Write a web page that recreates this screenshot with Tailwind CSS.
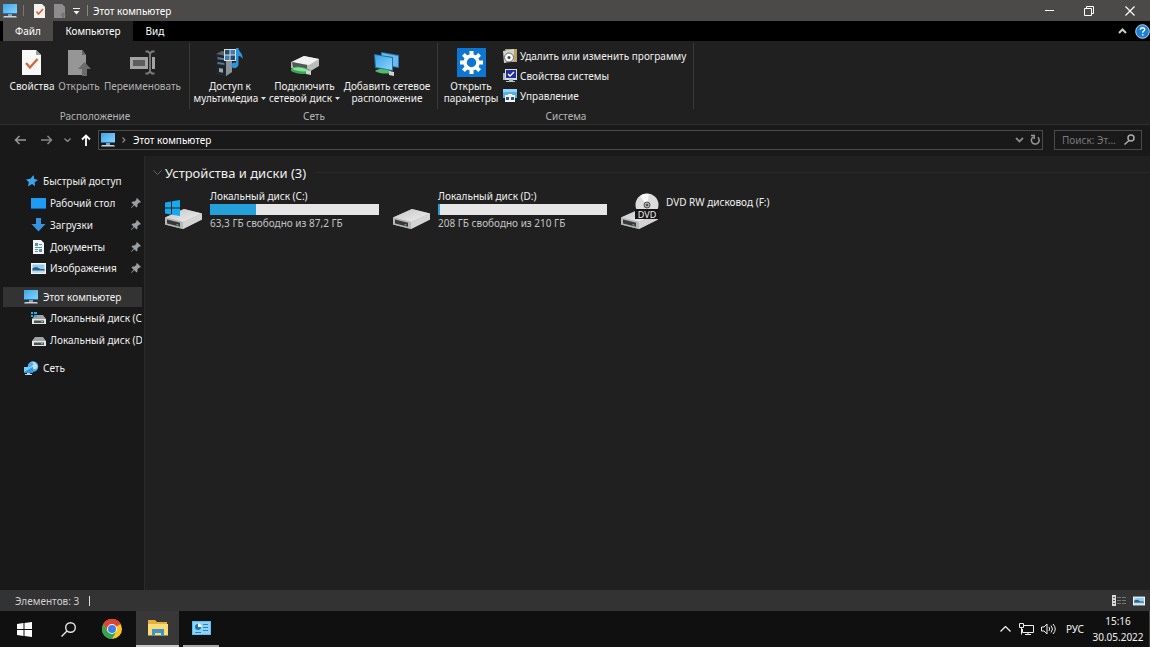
<!DOCTYPE html>
<html lang="ru">
<head>
    <meta charset="UTF-8">
    <meta name="viewport" content="width=device-width, initial-scale=1.0">
    <title>Этот компьютер</title>
    <script src="https://cdn.jsdelivr.net/npm/@tailwindcss/browser@4"></script>
</head>
<body class="flex h-screen flex-col overflow-hidden bg-[#202020] font-['Noto_Sans','Open_Sans',sans-serif] text-[10px] leading-3 text-[#f0f0f0]">

    <!-- shared icons -->
    <svg class="absolute h-0 w-0" aria-hidden="true">
        <defs>
            <linearGradient id="screen" x1="0" y1="0" x2="1" y2="1">
                <stop offset="0" stop-color="#3aa5ea"/><stop offset="1" stop-color="#8fd4fb"/>
            </linearGradient>
            <linearGradient id="metal" x1="0" y1="0" x2="1" y2="1">
                <stop offset="0" stop-color="#c4c4c4"/><stop offset="1" stop-color="#f0f0f0"/>
            </linearGradient>
        </defs>
        <symbol id="pc" viewBox="0 0 16 14">
            <path d="M1 0h14v10H1z" fill="url(#screen)"/>
            <path d="M1 9h14v1H1z" fill="#1c77b8"/>
            <path d="M6 10h4v2H6z" fill="#8ba3b5"/>
            <path d="M2 12h12l1 1.500H1z" fill="#c9d4dc"/>
        </symbol>
        <symbol id="drive" viewBox="0 0 40 24">
            <path d="M1 11.500 20 3l18 4.500v6L19 23 1 18.500z" fill="#a8a8a8"/>
            <path d="M1 11.500 20 3l18 4.500L19 16z" fill="url(#metal)"/>
            <path d="M1 11.500L19 16v7L1 18.500z" fill="#b8b8b8"/>
            <path d="M3 13.500l13 3.200v4L3 17.500z" fill="#353a38"/>
            <path d="M19 16l19-8.500v6L19 23z" fill="#d4d4d4"/>
            <path d="M12.500 18l2 .5v1.200l-2-.5z" fill="#59b77a"/>
        </symbol>
        <symbol id="drive-small" viewBox="0 0 14 9">
            <path d="M3 0h8l3 4H0z" fill="#9fa3a4"/>
            <path d="M0 4h14v5H0z" fill="#e3e6e7"/>
            <path d="M2 5.500h10V8H2z" fill="#4b5052"/>
            <path d="M9 6.200h2v1H9z" fill="#7fd695"/>
        </symbol>
        <symbol id="pin" viewBox="0 0 10 10">
            <path d="M6 0l4 4-1 .8-.8-.2-1.800 1.900.1 2L5.500 9.500 3.300 7.300.4 9.900 0 9.500l2.700-2.800L.5 4.500l1-1 2 .1 1.900-1.800-.2-.9z" fill="#9b9fa3"/>
        </symbol>
        <symbol id="picture" viewBox="0 0 15 11">
            <path d="M0 0h15v11H0z" fill="#f1f5f7"/>
            <path d="M1.500 1.500h12v8h-12z" fill="#8fccf0"/>
            <path d="M1.500 5l4-1 4 2h4v2h-12z" fill="#2b5f83"/>
            <path d="M1.500 7.500h12v2h-12z" fill="#b9d8e8"/>
        </symbol>
    </svg>

    <!-- title bar -->
    <header class="flex h-[21px] shrink-0 items-center bg-[#4b4a48]">
        <svg class="ml-[2px] h-[14px] w-4"><use href="#pc"/></svg>
        <span class="ml-[5px] h-[11px] w-px bg-[#777]"></span>
        <button class="ml-[10px]" aria-label="Свойства">
            <svg class="h-[14px] w-[11px]" viewBox="0 0 11 14">
                <path d="M0 0h8l3 3v11H0z" fill="#f4f1ef"/>
                <path d="M2.500 7.500l2 2.500 4.500-5" fill="none" stroke="#d0623a" stroke-width="1.500"/>
            </svg>
        </button>
        <button class="ml-[9px]" aria-label="Открыть">
            <svg class="h-[14px] w-3" viewBox="0 0 12 14">
                <path d="M0 0h8l3 3v11H0z" fill="#8d8d8d"/>
                <path d="M9 8l3 3.500h-2V14H8v-2.500H6z" fill="#767676"/>
            </svg>
        </button>
        <button class="ml-[7px]" aria-label="Настройка панели">
            <svg class="h-2 w-[7px]" viewBox="0 0 7 8"><path d="M0 1h7v1H0zM.5 4h6L3.500 7.500z" fill="#f0f0f0"/></svg>
        </button>
        <span class="ml-[7px] h-[11px] w-px bg-[#888]"></span>
        <h1 class="ml-[5px] grow text-white">Этот компьютер</h1>
        <button class="grid h-full w-10 place-items-center" aria-label="Свернуть"><span class="h-px w-[9px] bg-white"></span></button>
        <button class="grid h-full w-10 place-items-center" aria-label="Восстановить">
            <svg class="h-[10px] w-[10px]" viewBox="0 0 10 10" fill="none" stroke="#fff"><path d="M.5 2.500h7v7h-7zM2.500 2.500v-2h7v7h-2"/></svg>
        </button>
        <button class="grid h-full w-[41px] place-items-center" aria-label="Закрыть">
            <svg class="h-[10px] w-[10px]" viewBox="0 0 10 10" stroke="#fff" stroke-width="1.200"><path d="M.5.5l9 9M9.500.5l-9 9"/></svg>
        </button>
    </header>

    <!-- tabs -->
    <nav class="flex h-5 shrink-0 items-stretch bg-black text-white">
        <button class="ml-[3px] w-[50px] bg-[#4b4a48]">Файл</button>
        <button class="w-20 bg-[#202020]">Компьютер</button>
        <button class="w-[44px]">Вид</button>
        <span class="grow"></span>
        <button class="mr-[8px]" aria-label="Свернуть ленту">
            <svg class="h-[6px] w-[9px]" viewBox="0 0 9 6" fill="none" stroke="#ccc" stroke-width="2"><path d="M1 5l3.500-3.500L8 5"/></svg>
        </button>
        <button aria-label="Справка">
            <svg class="h-[15px] w-[15px]" viewBox="0 0 15 15">
                <circle cx="7.500" cy="7.500" r="6.800" fill="#1f7fd4" stroke="#b5d7f2"/>
                <path d="M5.400 5.800c0-2.800 4.300-2.600 4.300-.3 0 1.500-2 1.600-2 3.200M7.700 10v1.600" fill="none" stroke="#fff" stroke-width="1.400"/>
            </svg>
        </button>
    </nav>

    <!-- ribbon -->
    <section class="flex h-[84px] shrink-0 border-b border-[#303030] pt-[2px]">
        <div class="flex w-[190px] flex-col">
            <div class="flex h-[66px] items-start border-r border-[#3a3a3a] pl-2">
                <button class="flex w-12 flex-col items-center whitespace-nowrap pt-[6px]">
                    <svg class="mb-1 h-[27px] w-5" viewBox="0 0 20 27">
                        <path d="M0 1h14l5 5v20H0z" fill="#fbf9f8"/>
                        <path d="M14 1l5 5h-5z" fill="#9d9d9d"/>
                        <path d="M4 14l4 4.500 7.500-8.500" fill="none" stroke="#cf6a42" stroke-width="2.400"/>
                    </svg>
                    Свойства
                </button>
                <button class="flex w-[46px] flex-col items-center whitespace-nowrap pt-[6px] text-[#b0b0b0]">
                    <svg class="mb-1 h-[27px] w-6" viewBox="0 0 24 27">
                        <path d="M1 1h14l4 5v20H1z" fill="#969696"/>
                        <path d="M15 1l4 5h-4z" fill="#666"/>
                        <path d="M17.500 13l6.500 7h-4v7h-5v-7h-4z" fill="#6b6b6b"/>
                    </svg>
                    Открыть
                </button>
                <button class="flex w-[81px] flex-col items-center whitespace-nowrap pt-[6px] text-[#b0b0b0]">
                    <svg class="mb-1 h-[27px] w-[26px]" viewBox="0 0 26 27">
                        <path d="M0 8h25v12H0z" fill="#a3a3a3"/>
                        <path d="M3 11h12v6H3z" fill="#5d5d5d"/>
                        <path d="M20 4v19" stroke="#202020" stroke-width="4"/>
                        <path d="M15.500 2.500h2.500l2 2 2-2h2.500M20 4v19M15.500 24.500h2.500l2-2 2 2h2.500" fill="none" stroke="#7d7d7d" stroke-width="1.800"/>
                    </svg>
                    Переименовать
                </button>
            </div>
            <h2 class="pt-px text-center text-[#b4b4b4]">Расположение</h2>
        </div>

        <div class="flex w-[248px] flex-col">
            <div class="flex h-[66px] items-start border-r border-[#3a3a3a] pl-[2px]">
                <button class="flex w-[76px] flex-col items-center whitespace-nowrap pt-[5px]">
                    <svg class="mb-1 h-7 w-[30px]" viewBox="0 0 30 28">
                        <path d="M1 6l6-3 10 2v19l-6 4-10-3z" fill="#5c646a"/>
                        <path d="M1 6l10 2v20L1 25z" fill="#1e242b"/>
                        <path d="M2.500 9l7 1.200v2l-7-1zM2.500 14l7 1v2l-7-1z" fill="#5d7791"/>
                        <path d="M4 20l4 .7v4L4 24z" fill="#9aa3a9"/>
                        <path d="M11 8l6-3v19l-6 4z" fill="#8b9297"/>
                        <path d="M9 1h12v12H9z" fill="#d6dfe4"/>
                        <path d="M10 2h4.500v4.500H10zM15.500 7.500H20V12h-4.500z" fill="#2a4a6b"/>
                        <path d="M15.500 2H20v4.500h-4.500zM10 7.500h4.500V12H10z" fill="#3f7db0"/>
                        <path d="M21 0h2.500c0 4 5 5 4 11-1-2-2-3-4-3v8c0 5-7 5.500-7 1.500 0-2.500 2.500-3.500 4.500-2.500z" fill="#2d93dd"/>
                    </svg>
                    <span>Доступ к</span>
                    <span class="flex items-center gap-[3px]">мультимедиа
                        <svg class="h-[3px] w-[5px]" viewBox="0 0 5 3"><path d="M0 0h5L2.500 3z" fill="#ddd"/></svg></span>
                </button>
                <button class="flex w-[73px] flex-col items-center whitespace-nowrap pt-[5px]">
                    <svg class="mb-1 h-7 w-[30px]" viewBox="0 0 30 28">
                        <path d="M1 14L14 8l15 3v7l-10 6L1 20z" fill="#b9bcba"/>
                        <path d="M2 14L14 8l15 3-10 6z" fill="#f0f1f0"/>
                        <path d="M2 14l15 3v6L3 19z" fill="#515856"/>
                        <path d="M1 21c4-4 11-3 19 1v3c-6 2-14 1-19-2z" fill="#39a956"/>
                        <path d="M2 21c4-2 10-2 16 1v1c-5 1-11 0-16-2z" fill="#8ce09a"/>
                        <path d="M16 22l5 1v4l-5-1z" fill="#cfd4d2"/>
                    </svg>
                    <span>Подключить</span>
                    <span class="flex items-center gap-[3px]">сетевой диск
                        <svg class="h-[3px] w-[5px]" viewBox="0 0 5 3"><path d="M0 0h5L2.500 3z" fill="#ddd"/></svg></span>
                </button>
                <button class="flex w-[92px] flex-col items-center whitespace-nowrap pt-[5px]">
                    <svg class="mb-1 h-7 w-[26px]" viewBox="0 0 26 28">
                        <path d="M7 4l18 3v13l-18-3z" fill="#2577b4"/>
                        <path d="M8 5l16 3v11L8 16z" fill="#68baf0"/>
                        <path d="M0 6l19 3v14L1 20z" fill="#2471a8"/>
                        <path d="M1 7l17 3v12L2 19z" fill="url(#screen)"/>
                        <path d="M1 23c4-3 10-2 16 0v2c-5 1-11 1-16-2z" fill="#50bd68"/>
                        <path d="M15 23l5 1v4l-5-1z" fill="#cfd4d2"/>
                    </svg>
                    <span>Добавить сетевое</span>
                    <span>расположение</span>
                </button>
            </div>
            <h2 class="pt-px text-center text-[#b4b4b4]">Сеть</h2>
        </div>

        <div class="flex w-[256px] flex-col">
            <div class="flex h-[66px] items-start border-r border-[#3a3a3a] pl-[3px]">
                <button class="flex w-[60px] flex-col items-center whitespace-nowrap pt-[5px]">
                    <svg class="mb-[3px] h-[29px] w-[29px]" viewBox="0 0 29 29">
                        <path d="M0 0h29v29H0z" fill="#0d76d2"/>
                        <g stroke="#fff" stroke-width="4">
                            <path d="M14.500 3v5M14.500 21v5M3 14.500h5M21 14.500h5M6.400 6.400l3.500 3.500M19.100 19.100l3.500 3.500M6.400 22.600l3.500-3.500M19.100 9.900l3.500-3.500"/>
                        </g>
                        <circle cx="14.500" cy="14.500" r="6.500" fill="none" stroke="#fff" stroke-width="3.500"/>
                    </svg>
                    <span>Открыть</span>
                    <span>параметры</span>
                </button>
                <div class="flex flex-col pl-[2px] pt-[3px]">
                    <button class="flex h-5 items-center gap-[3px] whitespace-nowrap">
                        <svg class="h-[14px] w-[14px]" viewBox="0 0 14 14">
                            <path d="M2 0h12v13H6z" fill="#b9a36b"/>
                            <path d="M0 2l11-2v12L1 14z" fill="#d2d3d3"/>
                            <circle cx="6" cy="8.500" r="4.500" fill="#f8f8f8" stroke="#65696b"/>
                            <circle cx="6" cy="8.500" r="1.500" fill="#414141"/>
                        </svg>
                        Удалить или изменить программу
                    </button>
                    <button class="flex h-5 items-center gap-[3px] whitespace-nowrap">
                        <svg class="h-[14px] w-[14px]" viewBox="0 0 14 14">
                            <path d="M0 4h3v7H0z" fill="#aeb7bb"/>
                            <path d="M2 0h12v11H2z" fill="#d8dde0"/>
                            <path d="M3 1h10v8H3z" fill="#1e2e9d"/>
                            <path d="M5 5l2 2 4-4" fill="none" stroke="#fff" stroke-width="1.400"/>
                            <path d="M6 10h4v2h2v1H3v-1h3z" fill="#b8c0c4"/>
                        </svg>
                        Свойства системы
                    </button>
                    <button class="flex h-5 items-center gap-[3px] whitespace-nowrap">
                        <svg class="h-[14px] w-[14px]" viewBox="0 0 14 14">
                            <path d="M0 0h14v9H0z" fill="#4fb2ec"/>
                            <path d="M0 0h14v3H0z" fill="#93d5f8"/>
                            <path d="M2 6h10v7H2z" fill="#eef2f4"/>
                            <path d="M3 8h3v3H3zM8 8h3v3H8z" fill="#34566d"/>
                            <path d="M5 5h4v1H5z" fill="#fff"/>
                        </svg>
                        Управление
                    </button>
                </div>
            </div>
            <h2 class="pt-px text-center text-[#b4b4b4]">Система</h2>
        </div>
    </section>

    <!-- address row -->
    <section class="flex h-[31px] shrink-0 items-center bg-[#191919] pb-[2px] pl-[14px] pr-2">
        <button aria-label="Назад"><svg class="h-[10px] w-3" viewBox="0 0 12 10" fill="none" stroke="#999" stroke-width="1.500"><path d="M12 5H1.500M5.500 1l-4 4 4 4"/></svg></button>
        <button class="ml-[15px]" aria-label="Вперёд"><svg class="h-[10px] w-3" viewBox="0 0 12 10" fill="none" stroke="#888" stroke-width="1.500"><path d="M0 5h10.500M6.500 1l4 4-4 4"/></svg></button>
        <button class="ml-[11px]" aria-label="Недавние"><svg class="h-1 w-[7px]" viewBox="0 0 7 4" fill="none" stroke="#888" stroke-width="1.400"><path d="M.5.5l3 3 3-3"/></svg></button>
        <button class="ml-[10px]" aria-label="Вверх"><svg class="h-3 w-[10px]" viewBox="0 0 10 12" fill="none" stroke="#fff" stroke-width="1.800"><path d="M5 12V1.500M1 5.500l4-4 4 4"/></svg></button>
        <div class="ml-[7px] flex h-5 grow items-center border border-[#4a4a4a] pl-px pr-[2px]">
            <svg class="h-[14px] w-4"><use href="#pc"/></svg>
            <svg class="ml-[6px] h-[6px] w-1" viewBox="0 0 4 6" fill="none" stroke="#888" stroke-width="1.200"><path d="M.5.5L3 3 .5 5.500"/></svg>
            <button class="ml-[7px] text-white">Этот компьютер</button>
            <span class="grow"></span>
            <button aria-label="Журнал"><svg class="h-[6px] w-[9px]" viewBox="0 0 9 6" fill="none" stroke="#888" stroke-width="1.800"><path d="M1 1l3.500 3.500L8 1"/></svg></button>
            <button class="ml-[6px]" aria-label="Обновить">
                <svg class="h-[11px] w-[10px]" viewBox="0 0 10 11" fill="none" stroke="#999" stroke-width="1.500"><path d="M7.800 3.200A3.900 3.900 0 1 1 3 3M1 1.500h3.200V5"/></svg>
            </button>
        </div>
        <label class="ml-[11px] flex h-5 w-[88px] items-center border border-[#4a4a4a] pl-[7px] pr-[6px]">
            <input type="text" placeholder="Поиск: Эт..." aria-label="Поиск: Этот компьютер" class="w-0 grow bg-transparent outline-none placeholder:text-[#7a7a7a]">
            <svg class="h-[11px] w-[11px]" viewBox="0 0 11 11" fill="none" stroke="#aaa" stroke-width="1.500"><circle cx="7" cy="4" r="3"/><path d="M5 6.500L.5 10.500"/></svg>
        </label>
    </section>

    <div class="flex min-h-0 grow">
        <!-- navigation pane -->
        <aside class="w-[145px] shrink-0 overflow-hidden border-r border-[#2b2b2b] bg-[#191919] pl-[3px] pr-[2px] pt-[14px]">
            <a href="#" class="flex h-[22px] items-center pl-[23px] whitespace-nowrap">
                <svg class="mr-[5px] h-3 w-3" viewBox="0 0 12 12"><path d="M7.500 0l.8 4 3.700 1-3.300 2.200.3 4L6 9 2 11.500l.8-4.300L0 4.500l4.300-.7z" fill="#39a4ee"/></svg>
                Быстрый доступ
            </a>
            <a href="#" class="flex h-[22px] items-center pl-[28px] pr-px whitespace-nowrap">
                <svg class="mr-1 h-[11px] w-[15px]" viewBox="0 0 15 11"><path d="M0 0h15v11H0z" fill="#1d9bf5"/><path d="M0 10h15v1H0z" fill="#0c68b4"/></svg>
                <span class="grow">Рабочий стол</span>
                <svg class="h-[10px] w-[10px]"><use href="#pin"/></svg>
            </a>
            <a href="#" class="flex h-[22px] items-center pl-[28px] pr-px whitespace-nowrap">
                <svg class="mr-1 h-[14px] w-[15px]" viewBox="0 0 15 14"><path d="M5 0h5v6h4.500L7.500 13.500.5 6H5z" fill="#3793e0"/></svg>
                <span class="grow">Загрузки</span>
                <svg class="h-[10px] w-[10px]"><use href="#pin"/></svg>
            </a>
            <a href="#" class="flex h-[21px] items-center pl-[28px] pr-px whitespace-nowrap">
                <svg class="mr-1 h-[14px] w-[15px]" viewBox="0 0 15 14">
                    <path d="M2 0h8l3 3v11H2z" fill="#f2f5f6"/>
                    <path d="M4 3h3v3H4zM8 4h3v1H8zM4 7h7v1H4zM4 9h3v1H4zM8 9h3v3H8zM4 11h3v1H4z" fill="#5790a8"/>
                </svg>
                <span class="grow">Документы</span>
                <svg class="h-[10px] w-[10px]"><use href="#pin"/></svg>
            </a>
            <a href="#" class="flex h-[22px] items-center pl-[28px] pr-px whitespace-nowrap">
                <svg class="mr-1 h-[11px] w-[15px]"><use href="#picture"/></svg>
                <span class="grow">Изображения</span>
                <svg class="h-[10px] w-[10px]"><use href="#pin"/></svg>
            </a>
            <a href="#" class="mt-2 flex h-5 items-center bg-[#333] pl-[20px] whitespace-nowrap">
                <svg class="mr-1 h-[14px] w-4"><use href="#pc"/></svg>
                Этот компьютер
            </a>
            <a href="#" class="flex h-[22px] items-center overflow-hidden pl-[28px] whitespace-nowrap">
                <svg class="mr-1 h-3 w-[15px] shrink-0" viewBox="0 0 15 12">
                    <use href="#drive-small" x="1" y="3" width="14" height="9"/>
                    <path d="M0 0h2v2H0zM3 0h3v2H3zM0 3h2v2H0zM3 3h3v2H3z" fill="#20b0ee"/>
                </svg>
                Локальный диск (C:)
            </a>
            <a href="#" class="flex h-[22px] items-center overflow-hidden pl-[28px] whitespace-nowrap">
                <svg class="mr-1 h-3 w-[15px] shrink-0" viewBox="0 0 15 12"><use href="#drive-small" x="1" y="3" width="14" height="9"/></svg>
                Локальный диск (D:)
            </a>
            <a href="#" class="mt-[6px] flex h-[22px] items-center pl-[20px] whitespace-nowrap">
                <svg class="mr-1 h-[15px] w-4" viewBox="0 0 16 15">
                    <circle cx="10" cy="5.500" r="5.300" fill="#58aee6"/>
                    <path d="M8 1c3 0 3 3 1 4s0 3 3 3c2 0 3-2 2-4-1-3-4-4-6-3z" fill="#b8e0f7"/>
                    <path d="M1 6h9v6H1z" fill="#2f97de"/>
                    <path d="M1 6h9L1 11z" fill="#7ccaf6"/>
                    <path d="M4 12h3v1h2v1H2v-1h2z" fill="#c9d4dc"/>
                </svg>
                Сеть
            </a>
        </aside>

        <!-- drives -->
        <main class="grow pl-2">
            <div class="flex h-[33px] items-center">
                <svg class="h-[5px] w-[9px]" viewBox="0 0 9 5" fill="none" stroke="#666"><path d="M.5.5l4 4 4-4"/></svg>
                <h2 class="ml-[3px] text-[13px] leading-4">Устройства и диски (3)</h2>
                <span class="ml-2 h-px grow bg-[#2a2a2a]"></span>
            </div>
            <ul class="flex pl-[11px]">
                <li class="flex w-[228px] gap-[6px]">
                    <svg class="mt-[11px] h-[30px] w-10 shrink-0" viewBox="0 0 40 30">
                        <use href="#drive" x="0" y="6" width="40" height="24"/>
                        <path d="M1 2.500l6-1v6H1zM8 1.300l8-1.300v7.500H8zM1 8.500h6v6l-6-1zM8 8.500h8V16l-8-1.300z" fill="#15a9ee"/>
                    </svg>
                    <div class="w-[169px]">
                        <h3 class="leading-[14px]">Локальный диск (C:)</h3>
                        <div class="mt-px h-[11px] bg-[#e6e6e6]"><div class="h-full bg-[#26a0da]" style="width: 27.5%"></div></div>
                        <p class="pt-px leading-[14px] text-[#c4c4c4]">63,3 ГБ свободно из 87,2 ГБ</p>
                    </div>
                </li>
                <li class="flex w-[228px] gap-[6px]">
                    <svg class="mt-[17px] h-6 w-10 shrink-0"><use href="#drive"/></svg>
                    <div class="w-[169px]">
                        <h3 class="leading-[14px]">Локальный диск (D:)</h3>
                        <div class="mt-px h-[11px] bg-[#e6e6e6]"><div class="h-full bg-[#26a0da]" style="width: 1%"></div></div>
                        <p class="pt-px leading-[14px] text-[#c4c4c4]">208 ГБ свободно из 210 ГБ</p>
                    </div>
                </li>
                <li class="flex w-[228px] gap-[6px]">
                    <svg class="mt-1 h-[37px] w-10 shrink-0" viewBox="0 0 40 37">
                        <use href="#drive" x="0" y="13" width="40" height="24"/>
                        <circle cx="27" cy="12" r="11.500" fill="#dcdcdc"/>
                        <path d="M27 12L20 3a11.500 11.500 0 0 1 9-2z" fill="#fafafa"/>
                        <circle cx="27" cy="12" r="3" fill="#aaa" stroke="#555"/>
                        <circle cx="27" cy="12" r="1" fill="#333"/>
                        <path d="M15 16h24v10H15z" fill="#161616"/>
                        <text x="27" y="24.500" text-anchor="middle" font-size="9" fill="#f2f2f2">DVD</text>
                    </svg>
                    <h3 class="pt-[6px] leading-[14px]">DVD RW дисковод (F:)</h3>
                </li>
            </ul>
        </main>
    </div>

    <!-- status bar -->
    <div class="flex h-[21px] shrink-0 items-center bg-[#333] pl-[15px] pr-[5px] text-[#cfcfcf]">
        <span>Элементов: 3</span>
        <span class="ml-[10px] h-[10px] w-px bg-[#ddd]"></span>
        <span class="grow"></span>
        <button class="mr-[7px]" aria-label="Таблица">
            <svg class="h-[11px] w-[14px]" viewBox="0 0 14 11">
                <path d="M0 0h4v11H0z" fill="#d9d9d9"/>
                <path d="M1 2h2v1H1zM1 5h2v1H1zM1 8h2v1H1z" fill="#555"/>
                <path d="M5 2h4v1H5zM10 2h4v1h-4zM5 5h4v1H5zM10 5h4v1h-4zM5 8h4v1H5zM10 8h4v1h-4z" fill="#777"/>
            </svg>
        </button>
        <button aria-label="Крупные значки"><svg class="h-[10px] w-3"><use href="#picture"/></svg></button>
    </div>

    <!-- taskbar -->
    <footer class="flex h-9 shrink-0 items-stretch bg-[#101010]">
        <button class="grid w-12 place-items-center" aria-label="Пуск">
            <svg class="h-[15px] w-[15px]" viewBox="0 0 15 15"><path d="M0 2l6.500-1v6H0zM7.500.9L15 0v7H7.500zM0 8h6.500v6L0 13zM7.500 8H15v7l-7.500-1z" fill="#fff"/></svg>
        </button>
        <button class="grid w-10 place-items-center" aria-label="Поиск">
            <svg class="h-[15px] w-[15px]" viewBox="0 0 15 15" fill="none" stroke="#e5e5e5" stroke-width="1.400"><circle cx="9.500" cy="5.500" r="4.800"/><path d="M6 9l-5.500 5.500"/></svg>
        </button>
        <button class="grid w-12 place-items-center" aria-label="Chrome">
            <svg class="h-5 w-5" viewBox="0 0 20 20">
                <circle cx="10" cy="10" r="10" fill="#f9c922"/>
                <path d="M10 10L1.340 5A10 10 0 0 1 18.660 5z" fill="#df4334"/>
                <path d="M10 5h8.660A10 10 0 0 0 1.340 5L5.670 12.500z" fill="#df4334"/>
                <path d="M1.340 5A10 10 0 0 0 10 20l4.330-7.500-8.660 0z" fill="#35a350"/>
                <circle cx="10" cy="10" r="5" fill="#f4f4f4"/>
                <circle cx="10" cy="10" r="4" fill="#3d7fe8"/>
            </svg>
        </button>
        <button class="grid w-[43px] place-items-center border-b-2 border-[#c9c9c9] bg-[#383838]" aria-label="Проводник">
            <svg class="h-4 w-5" viewBox="0 0 20 16">
                <path d="M0 0h7l2 2h10v13H0z" fill="#e5b13c"/>
                <path d="M0 4h20v11.500H0z" fill="#fbdc76"/>
                <path d="M4 9h12v7h-3v-3H7v3H4z" fill="#3f94c9"/>
            </svg>
        </button>
        <button class="ml-1 grid w-9 place-items-center border-b-2 border-[#a8a8a8]" aria-label="Панель управления">
            <svg class="h-[14px] w-[19px]" viewBox="0 0 19 14">
                <path d="M0 0h19v14H0z" fill="#5dbcf0"/>
                <path d="M1 1h17v12H1z" fill="#8bd4f8"/>
                <circle cx="6" cy="6" r="3" fill="#1f71b0"/>
                <path d="M6 6V2.500A3.500 3.500 0 0 1 9.500 6z" fill="#fff"/>
                <path d="M11 3h5v1h-5zM11 6h5v1h-5zM11 9h5v1h-5zM3 11h6v1H3z" fill="#2582c4"/>
            </svg>
        </button>
        <span class="grow"></span>
        <button class="mr-[8px]" aria-label="Скрытые значки">
            <svg class="h-[6px] w-[11px]" viewBox="0 0 11 6" fill="none" stroke="#eee" stroke-width="1.300"><path d="M.5 5.500l5-5 5 5"/></svg>
        </button>
        <button class="mr-[7px]" aria-label="Сеть">
            <svg class="h-3 w-[15px]" viewBox="0 0 15 12" fill="none" stroke="#eee"><path d="M5 2.500h9.500v7H3.500V6M.5.500h4v4h-4zM2.500 5v6.500M6 11.500h6M9 10v1.500"/></svg>
        </button>
        <button class="mr-[9px]" aria-label="Громкость">
            <svg class="h-3 w-4" viewBox="0 0 16 12" fill="none" stroke="#eee"><path d="M.5 4h2.500l3-3v10l-3-3H.5zM8 4q1.500 2 0 4M10 2.500q3 3.500 0 7M12 1q4.500 5 0 10"/></svg>
        </button>
        <button class="mr-[10px]">РУС</button>
        <button class="flex w-[52px] flex-col items-center justify-center gap-1 pr-1">
            <span>15:16</span>
            <span>30.05.2022</span>
        </button>
        <span class="ml-[3px] w-px bg-[#444]"></span>
    </footer>

</body>
</html>
